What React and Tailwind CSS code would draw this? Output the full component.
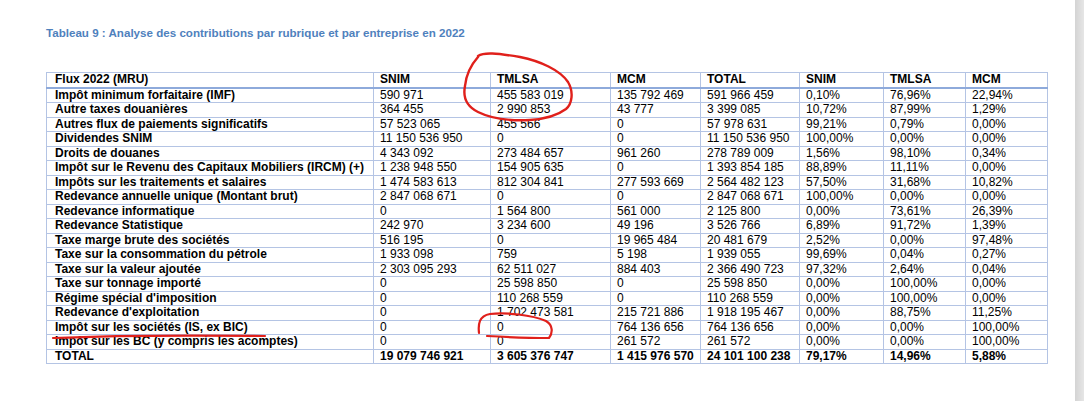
import React from "react"

const headers = ["Flux 2022 (MRU)", "SNIM", "TMLSA", "MCM", "TOTAL", "SNIM", "TMLSA", "MCM"]

const rows = [
  ["Impôt minimum forfaitaire (IMF)", "590 971", "455 583 019", "135 792 469", "591 966 459", "0,10%", "76,96%", "22,94%"],
  ["Autre taxes douanières", "364 455", "2 990 853", "43 777", "3 399 085", "10,72%", "87,99%", "1,29%"],
  ["Autres flux de paiements significatifs", "57 523 065", "455 566", "0", "57 978 631", "99,21%", "0,79%", "0,00%"],
  ["Dividendes SNIM", "11 150 536 950", "0", "0", "11 150 536 950", "100,00%", "0,00%", "0,00%"],
  ["Droits de douanes", "4 343 092", "273 484 657", "961 260", "278 789 009", "1,56%", "98,10%", "0,34%"],
  ["Impôt sur le Revenu des Capitaux Mobiliers (IRCM) (+)", "1 238 948 550", "154 905 635", "0", "1 393 854 185", "88,89%", "11,11%", "0,00%"],
  ["Impôts sur les traitements et salaires", "1 474 583 613", "812 304 841", "277 593 669", "2 564 482 123", "57,50%", "31,68%", "10,82%"],
  ["Redevance annuelle unique (Montant brut)", "2 847 068 671", "0", "0", "2 847 068 671", "100,00%", "0,00%", "0,00%"],
  ["Redevance informatique", "0", "1 564 800", "561 000", "2 125 800", "0,00%", "73,61%", "26,39%"],
  ["Redevance Statistique", "242 970", "3 234 600", "49 196", "3 526 766", "6,89%", "91,72%", "1,39%"],
  ["Taxe marge brute des sociétés", "516 195", "0", "19 965 484", "20 481 679", "2,52%", "0,00%", "97,48%"],
  ["Taxe sur la consommation du pétrole", "1 933 098", "759", "5 198", "1 939 055", "99,69%", "0,04%", "0,27%"],
  ["Taxe sur la valeur ajoutée", "2 303 095 293", "62 511 027", "884 403", "2 366 490 723", "97,32%", "2,64%", "0,04%"],
  ["Taxe sur tonnage importé", "0", "25 598 850", "0", "25 598 850", "0,00%", "100,00%", "0,00%"],
  ["Régime spécial d'imposition", "0", "110 268 559", "0", "110 268 559", "0,00%", "100,00%", "0,00%"],
  ["Redevance d'exploitation", "0", "1 702 473 581", "215 721 886", "1 918 195 467", "0,00%", "88,75%", "11,25%"],
  ["Impôt sur les sociétés (IS, ex BIC)", "0", "0", "764 136 656", "764 136 656", "0,00%", "0,00%", "100,00%"],
  ["Impôt sur les BC (y compris les acomptes)", "0", "0", "261 572", "261 572", "0,00%", "0,00%", "100,00%"],
]

const total = ["TOTAL", "19 079 746 921", "3 605 376 747", "1 415 976 570", "24 101 100 238", "79,17%", "14,96%", "5,88%"]

// red pen marks drawn on top of the scan
function Annotations() {
  return (
    <svg className="absolute inset-0 pointer-events-none" width="1084" height="401" viewBox="0 0 1084 401" fill="none">
      <path
        d="M478 56 C484 52 496 53 520 57 C540 61 560 70 568 82 C574 92 572 104 566 109 C558 115 545 119 530 120 C510 121 490 118 478 112 C466 106 463 96 465 86 C466 76 470 66 478 57"
        stroke="#e0201b" strokeWidth="2.4" strokeLinecap="round"
      />
      <path d="M53 338 C100 336 180 335 265 336" stroke="#e0201b" strokeWidth="2.2" strokeLinecap="round" />
      <path
        d="M479 333 C478 324 479 316 490 314 C506 312 532 315 546 321 C553 325 553 333 549 338 C530 338 505 337 487 336"
        stroke="#e0201b" strokeWidth="2.2" strokeLinecap="round"
      />
    </svg>
  )
}

export default function App() {
  return (
    <div className="relative flex w-[1084px] h-[401px] bg-white font-['Liberation_Sans',Arial,sans-serif] text-black">
      <div className="flex-1 pl-[46px] pt-[26px]">
        <h2 className="text-[11.6px] font-bold text-[#4f81bd] leading-[14px]">
          Tableau 9 : Analyse des contributions par rubrique et par entreprise en 2022
        </h2>

        <table className="mt-[32px] border-collapse table-fixed text-[12px] leading-[13.5px]">
          <colgroup>
            <col className="w-[327px]" />
            <col className="w-[117px]" />
            <col className="w-[120px]" />
            <col className="w-[90px]" />
            <col className="w-[99px]" />
            <col className="w-[84px]" />
            <col className="w-[82px]" />
            <col className="w-[82px]" />
          </colgroup>
          <thead>
            <tr>
              {headers.map((h, i) => (
                <th
                  key={i}
                  className={`border border-[#b4c4e4] border-b-2 border-b-[#8eaadb] text-left font-bold whitespace-nowrap py-0 ${i === 0 ? "pl-[8px]" : "pl-[6px]"}`}
                >
                  {h}
                </th>
              ))}
            </tr>
          </thead>
          <tbody>
            {rows.map((r, ri) => (
              <tr key={ri}>
                {r.map((c, i) => (
                  <td
                    key={i}
                    className={`border border-[#b4c4e4] whitespace-nowrap py-0 ${i === 0 ? "pl-[8px] font-bold" : "pl-[6px]"}`}
                  >
                    {c}
                  </td>
                ))}
              </tr>
            ))}
            <tr>
              {total.map((c, i) => (
                <td
                  key={i}
                  className={`border border-[#b4c4e4] whitespace-nowrap py-0 font-bold ${i === 0 ? "pl-[8px]" : "pl-[6px]"}`}
                >
                  {c}
                </td>
              ))}
            </tr>
          </tbody>
        </table>
      </div>

      <div className="w-[9px] h-full bg-gradient-to-r from-[#d4d4d4] to-[#e6e6e6]" />

      <Annotations />
    </div>
  )
}
